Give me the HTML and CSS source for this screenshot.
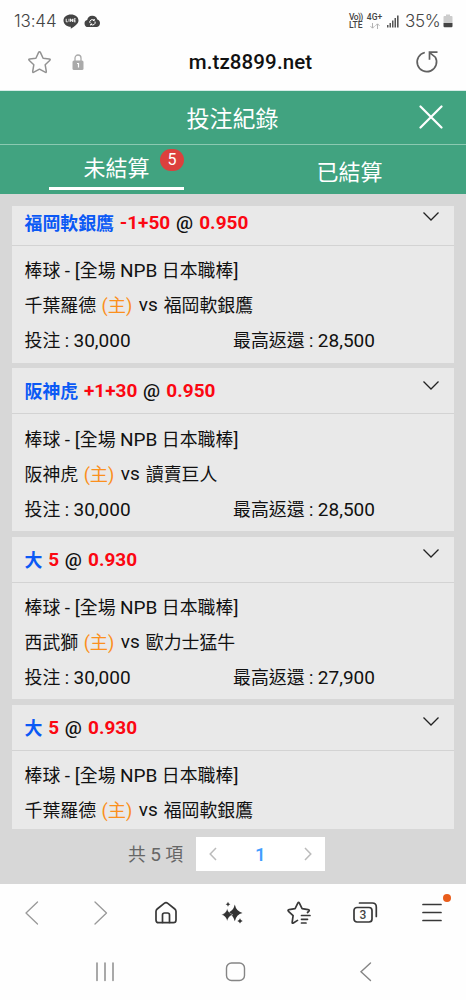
FILE: index.html
```html
<!DOCTYPE html>
<html lang="zh-Hant">
<head>
<meta charset="utf-8">
<title>投注紀錄</title>
<link rel="stylesheet" href="styles.css">
</head>
<body>
<div class="phone">
  <header class="status">
    <span class="clock">13:44</span>
    <svg class="line-app" width="16" height="15" viewBox="0 0 16 15"><path d="M8 .5c4.200 0 7.500 2.600 7.500 5.900 0 3.500-4.300 6-7.300 8.200-.5.3-.5-.2-.4-1.800C3.700 12.600.5 9.800.5 6.400.5 3.100 3.800.5 8 .5z" fill="#444"/><path d="M3.200 4.800v3h1.500M6 4.800v3M7.500 7.800v-3l2 3v-3M12.700 4.800H11v3h1.700M11 6.300h1.500" fill="none" stroke="#fff" stroke-width=".9"/></svg>
    <svg class="cloud" width="17" height="13" viewBox="0 0 17 13"><path d="M4 12a3.500 3.500 0 0 1-.8-6.900A5.200 5.200 0 0 1 13.300 4.500 3.900 3.900 0 0 1 13 12z" fill="#444"/><path d="M6 8a2.500 2.500 0 0 1 4-2.800M11 6.500a2.500 2.500 0 0 1-4 2.800M8.800 5.500h1.500V4M8.200 9H6.700v1.500" fill="none" stroke="#fff" stroke-width="1"/></svg>
    <span class="lte"><span>Vo))</span><span>LTE</span></span>
    <span class="network"><span>4G+</span>
      <svg width="10" height="6" viewBox="0 0 10 6" fill="none" stroke="#aaa" stroke-width=".9"><path d="M2.500 0v5M.5 3.200l2 2 2-2M7.500 6V1M5.500 2.800l2-2 2 2"/></svg>
    </span>
    <svg class="signal" width="12" height="13" viewBox="0 0 12 13" fill="#555"><path d="M0 10h1.500v2.500H0zM2.500 8H4v4.500H2.500zM5 5.500h1.500v7H5zM7.500 3H9v9.500H7.500zM10 .5h1.600v12H10z"/></svg>
    <span class="percent">35%</span>
    <svg class="battery" width="10" height="14" viewBox="0 0 10 14"><path d="M3 .5h4V2h1.500q1 0 1 1v6h-9V3q0-1 1-1H3z" fill="#ccc"/><path d="M.5 9h9v3q0 1.200-1 1.200h-7q-1 0-1-1.200z" fill="#444"/></svg>
  </header>

  <div class="address">
    <svg class="star" width="25" height="25" viewBox="0 0 25 25" fill="none" stroke="#929292" stroke-width="1.500" stroke-linejoin="round"><path d="M12.500 1.700q.6 0 1 .9l2.600 5.600 6.100.8q1.800.3.500 1.500L18.200 14.800l1.100 6.500q.2 1.600-1.200.9L12.500 19.200l-5.600 3q-1.400.7-1.200-.9l1.100-6.500L2.300 10.500Q1 9.300 2.800 9l6.100-.8 2.600-5.600q.4-.9 1-.9z"/></svg>
    <svg class="lock" width="12" height="17" viewBox="0 0 12 17"><path d="M3 7.500V4a3 3 0 0 1 6 0v3.500" fill="none" stroke="#aaa" stroke-width="1.300"/><rect x=".5" y="6.500" width="11" height="9.500" rx="1.500" fill="#aaa"/><path d="M5 9.500h1.500v4" fill="none" stroke="#fff" stroke-width="1.200"/></svg>
    <span class="url">m.tz8899.net</span>
    <svg class="reload" width="24" height="24" viewBox="0 0 24 24" fill="none" stroke="#606060" stroke-width="1.700"><path d="M9.800 2.500A9.700 9.700 0 1 0 20.300 7.200L15 2.800M22.500 2.200h-8v7.500"/></svg>
  </div>

  <div class="titlebar">
    <h1 class="title">投注紀錄</h1>
    <svg class="close" width="24" height="24" viewBox="0 0 24 24" fill="none" stroke="#fff" stroke-width="2.200" stroke-linecap="round"><path d="M1.500 1.500l21 21M22.500 1.500l-21 21"/></svg>
  </div>
  <nav class="tabs">
    <div class="tab"><div class="active"><span class="tab-label">未結算</span><span class="badge">5</span></div></div>
    <div class="tab">已結算</div>
  </nav>

  <main class="records">
    <div class="list">
      <article class="card">
        <div class="head"><div><b class="pick">福岡軟銀鷹</b> <b class="odds">-1+50</b> <span class="at">@</span> <b class="odds">0.950</b></div><svg class="chevron" viewBox="0 0 16 9"><path d="M.5.5L8 8 15.500.5"/></svg></div>
        <div class="body">
          <div>棒球 <span class="latin">- [</span>全場 <span class="latin">NPB</span> 日本職棒<span class="latin">]</span></div>
          <div>千葉羅德 <span class="home">(主)</span> <span class="vs">vs</span> 福岡軟銀鷹</div>
          <div class="money"><span>投注 : <span class="latin">30,000</span></span><span>最高返還 : <span class="latin">28,500</span></span></div>
        </div>
      </article>
      <article class="card">
        <div class="head"><div><b class="pick">阪神虎</b> <b class="odds">+1+30</b> <span class="at">@</span> <b class="odds">0.950</b></div><svg class="chevron" viewBox="0 0 16 9"><path d="M.5.5L8 8 15.500.5"/></svg></div>
        <div class="body">
          <div>棒球 <span class="latin">- [</span>全場 <span class="latin">NPB</span> 日本職棒<span class="latin">]</span></div>
          <div>阪神虎 <span class="home">(主)</span> <span class="vs">vs</span> 讀賣巨人</div>
          <div class="money"><span>投注 : <span class="latin">30,000</span></span><span>最高返還 : <span class="latin">28,500</span></span></div>
        </div>
      </article>
      <article class="card">
        <div class="head"><div><b class="pick">大</b> <b class="odds">5</b> <span class="at">@</span> <b class="odds">0.930</b></div><svg class="chevron" viewBox="0 0 16 9"><path d="M.5.5L8 8 15.500.5"/></svg></div>
        <div class="body">
          <div>棒球 <span class="latin">- [</span>全場 <span class="latin">NPB</span> 日本職棒<span class="latin">]</span></div>
          <div>西武獅 <span class="home">(主)</span> <span class="vs">vs</span> 歐力士猛牛</div>
          <div class="money"><span>投注 : <span class="latin">30,000</span></span><span>最高返還 : <span class="latin">27,900</span></span></div>
        </div>
      </article>
      <article class="card">
        <div class="head"><div><b class="pick">大</b> <b class="odds">5</b> <span class="at">@</span> <b class="odds">0.930</b></div><svg class="chevron" viewBox="0 0 16 9"><path d="M.5.5L8 8 15.500.5"/></svg></div>
        <div class="body">
          <div>棒球 <span class="latin">- [</span>全場 <span class="latin">NPB</span> 日本職棒<span class="latin">]</span></div>
          <div>千葉羅德 <span class="home">(主)</span> <span class="vs">vs</span> 福岡軟銀鷹</div>
        </div>
      </article>
    </div>
    <div class="pagination">
      <span class="total">共 <span class="count">5</span> 項</span>
      <div class="pager">
        <svg width="8" height="14" viewBox="0 0 8 14"><path d="M7 1L1.200 7 7 13"/></svg>
        <span class="page">1</span>
        <svg width="8" height="14" viewBox="0 0 8 14"><path d="M1 1l5.800 6L1 13"/></svg>
      </div>
    </div>
  </main>

  <nav class="toolbar">
    <svg class="muted" width="26" height="26" viewBox="0 0 26 26"><path d="M18.500 2L7 13 18.500 24"/></svg>
    <svg class="muted" width="26" height="26" viewBox="0 0 26 26"><path d="M9 2L20.500 13 9 24"/></svg>
    <svg width="26" height="26" viewBox="0 0 26 26"><path d="M4 11.500q0-1.500 1.200-2.500l7-5.700q1.800-1.400 3.600 0l7 5.700Q24 10 24 11.500V20q0 2.700-2.700 2.700H6.700Q4 22.700 4 20z"/><path d="M10.500 22.500V15q0-2 2-2h3q2 0 2 2v7.500"/></svg>
    <svg width="26" height="26" viewBox="0 0 26 26"><g fill="#333" stroke="none"><path d="M15.800 4.500q1.500 7 7.700 8.400-6.200 1.400-7.700 8.400-1.500-7-7.700-8.400Q14.300 11.500 15.800 4.500z"/><path d="M8.200 8.500q1.200 5 5.700 6.200-4.500 1.200-5.700 6.200-1.200-5-5.700-6.200Q7 13.500 8.200 8.500z" stroke="#fff" stroke-width=".4"/><path d="M9 1.800q.4 2 2.400 2.500-2 .4-2.400 2.500-.4-2.100-2.400-2.500 2-.5 2.400-2.500zM21 18.200q.5 2.200 2.700 2.700-2.200.5-2.700 2.700-.5-2.200-2.700-2.700 2.200-.5 2.700-2.700z"/></g></svg>
    <svg width="26" height="26" viewBox="0 0 26 26"><path d="M11.500 20.400L7.400 23q-1.500.8-1.200-.9l.9-6.400-4.600-4.400Q1.300 9.900 3.100 9.600l6-.9 2.700-5.500q.8-1.500 1.600 0l2.700 5.500 6 .9q2 .4.600 1.800L21.500 12.500M15.500 15.500H24M15.500 19.300h6M15.500 23H20"/></svg>
    <svg width="26" height="26" viewBox="0 0 26 26"><rect x="2" y="7.500" width="18" height="14.500" rx="3"/><path d="M7.500 3h12.800q4 0 4 4v9.500"/><text class="tab-count" x="11" y="19.300">3</text></svg>
    <svg width="26" height="26" viewBox="0 0 26 26"><path d="M4 4.500h18M4 12.500h18M4 20.500h18"/></svg>
    <span class="notice"></span>
  </nav>
  <nav class="system">
    <svg width="22" height="22" viewBox="0 0 22 22"><path d="M3 2v17.500M11 2v17.500M19 2v17.500"/></svg>
    <svg width="22" height="22" viewBox="0 0 22 22"><rect x="1.500" y="2" width="18" height="17.500" rx="5"/></svg>
    <svg width="22" height="22" viewBox="0 0 22 22"><path d="M15.500 2L6 10.700l9.500 8.800"/></svg>
  </nav>
</div>
</body>
</html>
```

FILE: styles.css
```css
* { box-sizing: border-box; }
body { margin: 0; background: #fefefe; font-family: Roboto, "Noto Sans CJK TC", sans-serif; color: #111; }
svg { display: block; flex: none; }
.phone { width: 466px; height: 1000px; display: flex; flex-direction: column; overflow: hidden; }
.status { height: 42px; display: flex; align-items: center; padding: 0 13px 0 14px; color: #444; flex: none; }
.clock { width: 42px; font: 300 17px/20px Inter, sans-serif; letter-spacing: -.15px; white-space: nowrap; }
.line-app { margin-left: 7px; }
.cloud { margin-left: 5px; }
.lte, .network { font: 500 8.500px/8px Roboto, sans-serif; display: flex; flex-direction: column; white-space: nowrap; }
.lte { margin-left: auto; width: 14px; }
.lte span:first-child { letter-spacing: -.6px; }
.network { margin-left: 4px; width: 15px; align-items: center; }
.network svg { margin-top: 2px; }
.signal { margin-left: 5px; }
.percent { font: 300 17px/20px Inter, sans-serif; margin-left: 6px; width: 36px; letter-spacing: -.3px; }
.battery { margin-left: 2px; }
.address { height: 49px; display: flex; align-items: center; padding: 0 27px 8px 27px; border-bottom: 1px solid #d7ece7; flex: none; }
.lock { margin-left: 20px; }
.url { flex: 1; text-align: center; font: 500 20.500px/24px Roboto, sans-serif; letter-spacing: .1px; padding: 0 0 0 2px; }
.titlebar { height: 54px; background: #41a380; border-bottom: 1px solid #8bc9b1; display: flex; align-items: center; padding: 0 23px 0 46px; flex: none; color: #fff; }
.title { flex: 1; margin: 0; padding-top: 5px; text-align: center; font-size: 23px; line-height: 30px; font-weight: 400; }
.close { margin-top: -1px; }
.tabs { height: 49px; display: flex; background: #41a380; color: #fff; flex: none; font-size: 22px; line-height: 55px; text-align: center; }
.tab { flex: 1; }
.active { position: relative; width: 135px; height: 45px; margin-left: 49px; border-bottom: 3px solid #fff; line-height: 48px; }
.badge { position: absolute; right: 0; top: 4px; width: 24px; height: 22px; border-radius: 11px; background: #dc403d; font-size: 16px; line-height: 22px; }
.records { height: 690px; padding: 12px 12px 0; background: #d7d7d7; flex: none; }
.list { height: 623px; overflow: hidden; }
.card { height: 162.800px; margin-bottom: 5.600px; background: #e9e9e9; }
.card:first-child { margin-top: -6.200px; }
.head { height: 46px; border-bottom: 1px solid #d3d3d3; padding: 0 15px 0 12.500px; display: flex; justify-content: space-between; font-size: 19px; line-height: 46px; white-space: nowrap; }
.pick { color: #0b59f5; font-size: 17.900px; position: relative; top: 1px; margin-right: 1px; }
.odds { color: #fb0712; }
.at { font-weight: 500; margin: 0 1.500px 0 1px; }
.chevron { width: 16px; height: 9px; margin-top: 12.500px; fill: none; stroke: #222; stroke-width: 1.300; }
.body { padding: 7.500px 12.500px 0; font-size: 17.900px; line-height: 35px; white-space: nowrap; }
.body > div { height: 35px; }
.latin { font-size: 19px; }
.home { color: #fb901d; margin: 0 1px; font-size: 18.200px; }
.vs { position: relative; top: -1px; font-size: 19px; margin: 0 1.500px 0 1px; }
.money { display: grid; grid-template-columns: 208.500px auto; }
.pagination { display: flex; align-items: center; margin-top: 8px; padding-left: 116px; }
.total { width: 68px; font-size: 17.800px; line-height: 32px; padding-top: 1px; color: #666; white-space: nowrap; }
.count { font-size: 19px; }
.pager { width: 129px; height: 34px; background: #fff; display: flex; align-items: center; justify-content: space-between; padding: 0 13px; }
.pager svg { fill: none; stroke: #bbb; stroke-width: 1.500; }
.page { color: #409eff; font-size: 19px; font-weight: 500; }
.toolbar { position: relative; height: 58px; display: flex; justify-content: space-between; align-items: center; padding: 0 21px 0 19px; flex: none; }
.toolbar svg { fill: none; stroke: #383838; stroke-width: 1.700; stroke-linecap: round; stroke-linejoin: round; }
.toolbar .muted { stroke: #999; stroke-width: 1.300; }
.toolbar .tab-count { font: 500 12px Roboto, sans-serif; fill: #444; stroke: none; text-anchor: middle; }
.notice { position: absolute; left: 443px; top: 10px; width: 8px; height: 8px; border-radius: 50%; background: #e95d1b; }
.system { height: 58px; display: flex; justify-content: space-between; align-items: center; padding: 2px 89px 0 94px; flex: none; }
.system svg { fill: none; stroke: #858585; stroke-width: 1.400; stroke-linecap: round; }
```
